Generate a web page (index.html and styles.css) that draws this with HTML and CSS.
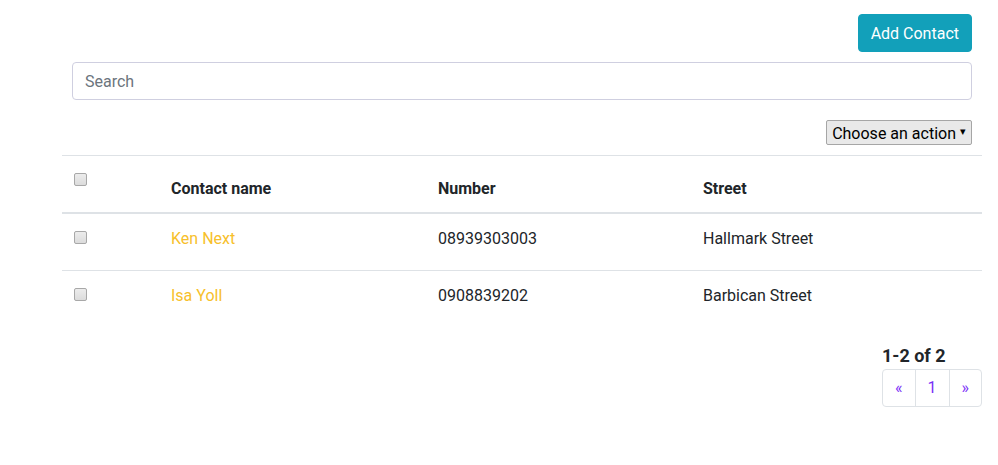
FILE: index.html
```html
<!DOCTYPE html>
<html>
<head>
<meta charset="utf-8">
<link rel="stylesheet" href="styles.css">
</head>
<body>
<div class="page">
  <div class="top">
    <div class="top-bar">
      <button class="btn-add">Add Contact</button>
    </div>
    <input class="search" type="text" placeholder="Search">
    <div class="actions">
      <div class="action-select"><span>Choose an action</span><span class="arrow">▾</span></div>
    </div>
  </div>
  <table class="contacts">
    <colgroup>
      <col class="c-check"><col class="c-name"><col class="c-num"><col>
    </colgroup>
    <thead>
      <tr>
        <th class="check-cell"><div class="cb-wrap"><input type="checkbox" class="cb"></div></th>
        <th>Contact name</th>
        <th>Number</th>
        <th>Street</th>
      </tr>
    </thead>
    <tbody>
      <tr>
        <td class="check-cell"><div class="cb-wrap"><input type="checkbox" class="cb"></div></td>
        <td><a class="name" href="#">Ken Next</a></td>
        <td>08939303003</td>
        <td>Hallmark Street</td>
      </tr>
      <tr>
        <td class="check-cell"><div class="cb-wrap"><input type="checkbox" class="cb"></div></td>
        <td><a class="name" href="#">Isa Yoll</a></td>
        <td>0908839202</td>
        <td>Barbican Street</td>
      </tr>
    </tbody>
  </table>
  <div class="footer">
    <div class="pager-block">
      <div class="count">1-2 of 2</div>
      <ul class="pagination">
        <li><a href="#">«</a></li>
        <li><a class="num" href="#">1</a></li>
        <li><a href="#">»</a></li>
      </ul>
    </div>
  </div>
</div>
</body>
</html>
```

FILE: styles.css
```css
* { box-sizing: border-box; }
body {
  margin: 0;
  font-family: Roboto, "Liberation Sans", sans-serif;
  font-size: 16px;
  line-height: 1.5;
  color: #212529;
  background: #fff;
}
.page {
  padding: 14px 16px 0 62px;
}
.top {
  padding: 0 10px;
}
.top-bar {
  display: flex;
  justify-content: flex-end;
}
.btn-add {
  font-family: inherit;
  font-size: 16px;
  line-height: 24px;
  padding: 7px 12px 5px;
  color: #fff;
  background: #12a0ba;
  border: 1px solid #12a0ba;
  border-radius: 4px;
  cursor: pointer;
}
.search {
  display: block;
  width: 100%;
  margin-top: 10px;
  height: 38px;
  padding: 6px 12px;
  font-family: inherit;
  font-size: 16px;
  color: #495057;
  border: 1px solid #cfcfe0;
  border-radius: 4px;
  outline: none;
}
.search::placeholder { color: #6c757d; }
.actions {
  display: flex;
  justify-content: flex-end;
  margin-top: 20px;
}
.action-select {
  display: flex;
  align-items: center;
  gap: 4px;
  height: 25px;
  padding: 1px 5px 0 5px;
  font-size: 16px;
  line-height: 23px;
  color: #000;
  background: #e9e9e9;
  border: 1px solid #a6a6a6;
  border-radius: 2px;
}
.action-select .arrow {
  font-size: 11px;
  line-height: 1;
  margin-top: -4px;
}
.contacts {
  width: 100%;
  margin-top: 10px;
  border-collapse: collapse;
  table-layout: fixed;
}
.c-check { width: 97px; }
.c-name { width: 267px; }
.c-num { width: 265px; }
.contacts th,
.contacts td {
  padding: 13px 12px 11px;
  text-align: left;
  border-top: 1px solid #dee2e6;
}
.contacts th {
  vertical-align: bottom;
  font-weight: bold;
  border-bottom: 2px solid #dee2e6;
}
.contacts td {
  vertical-align: top;
}
.contacts .check-cell {
  padding: 12px;
  vertical-align: top;
}
.contacts tbody tr:first-child td { border-top: 0; }
.cb-wrap {
  height: 32px;
  padding-top: 5px;
}
.cb {
  display: block;
  -webkit-appearance: none;
  appearance: none;
  margin: 0;
  width: 13px;
  height: 13px;
  border: 1px solid #a8a8a8;
  border-radius: 2px;
  background: linear-gradient(#ececec, #dcdcdc);
}
.name {
  color: #f7c02b;
  text-decoration: none;
}
.footer {
  display: flex;
  justify-content: flex-end;
  margin-top: 14px;
}
.count {
  font-size: 18px;
  font-weight: bold;
  line-height: 27px;
  padding-top: 1px;
}
.pagination {
  display: flex;
  list-style: none;
  margin: 0;
  padding: 0;
}
.pagination li a {
  display: block;
  height: 38px;
  padding: 8px 12px;
  line-height: 20px;
  color: #7a2ff7;
  text-decoration: none;
  border: 1px solid #dee2e6;
  margin-left: -1px;
}
.pagination li a.num {
  font-size: 16px;
}
.pagination li:first-child a {
  margin-left: 0;
  border-radius: 4px 0 0 4px;
}
.pagination li:last-child a {
  border-radius: 0 4px 4px 0;
}
```
